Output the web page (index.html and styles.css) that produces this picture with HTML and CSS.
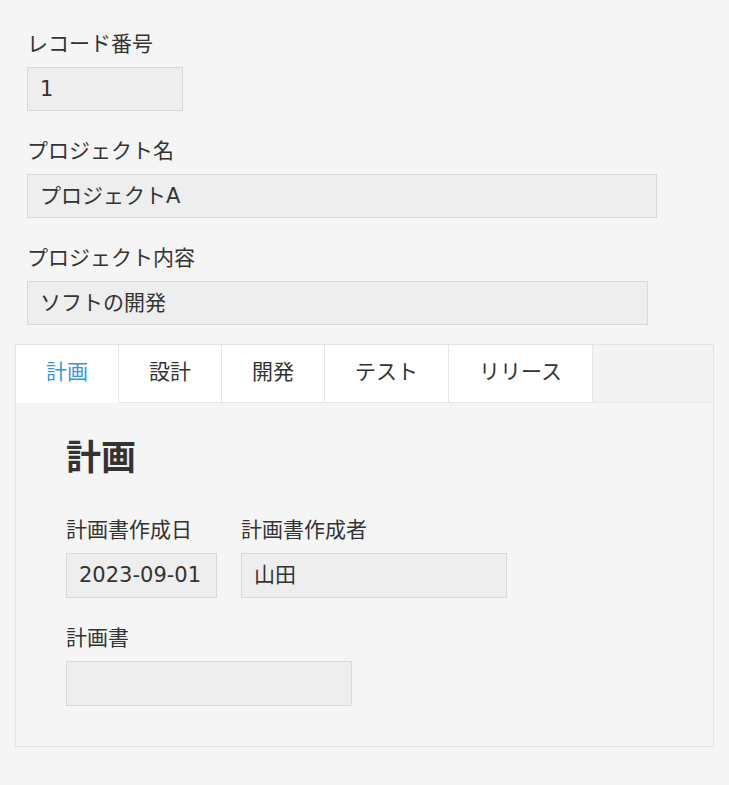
FILE: index.html
```html
<!DOCTYPE html>
<html lang="ja">
<head>
<meta charset="utf-8">
<title>レコード</title>
<link rel="stylesheet" href="styles.css">
</head>
<body>
<div class="form">
  <div class="fields">
    <div class="field">
      <div class="label">レコード番号</div>
      <div class="value w-record">1</div>
    </div>
    <div class="field">
      <div class="label">プロジェクト名</div>
      <div class="value w-name">プロジェクトA</div>
    </div>
    <div class="field">
      <div class="label">プロジェクト内容</div>
      <div class="value w-desc">ソフトの開発</div>
    </div>
  </div>

  <div class="tabs">
    <div class="tab-bar">
      <div class="tab active">計画</div>
      <div class="tab">設計</div>
      <div class="tab">開発</div>
      <div class="tab">テスト</div>
      <div class="tab">リリース</div>
    </div>
    <div class="panel">
      <h2 class="panel-title">計画</h2>
      <div class="row">
        <div class="field">
          <div class="label">計画書作成日</div>
          <div class="value w-date">2023-09-01</div>
        </div>
        <div class="field">
          <div class="label">計画書作成者</div>
          <div class="value w-author">山田</div>
        </div>
      </div>
      <div class="row">
        <div class="field">
          <div class="label">計画書</div>
          <div class="value w-doc"></div>
        </div>
      </div>
    </div>
  </div>
</div>
</body>
</html>
```

FILE: styles.css
```css
* {
  box-sizing: border-box;
}

body {
  margin: 0;
  background: #f5f5f5;
  color: #333333;
  font-family: "Noto Sans CJK JP", "Noto Sans", sans-serif;
  font-size: 21px;
}

.form {
  padding: 27px 15px 30px 15px;
}

.fields {
  display: flex;
  flex-direction: column;
  gap: 23px;
  padding-left: 12px;
}

.field {
  display: flex;
  flex-direction: column;
  align-items: flex-start;
}

.label {
  line-height: 30px;
  margin-bottom: 10px;
  white-space: nowrap;
}

.value {
  height: 44px;
  border: 1px solid #d8d8d8;
  background: #eeeeee;
  padding: 0 12px 0 12px;
  font-family: "DejaVu Sans", "Noto Sans CJK JP", sans-serif;
  line-height: 42px;
  white-space: nowrap;
  overflow: hidden;
}

.w-record { width: 156px; }
.w-name { width: 630px; }
.w-desc { width: 621px; }
.w-date { width: 151px; }
.w-author { width: 266px; }
.w-doc { width: 286px; }

.tabs {
  margin-top: 19px;
  border: 1px solid #e0e3ea;
}

.tab-bar {
  display: flex;
  background: #f3f3f4;
  border-bottom: 1px solid #e3e6ec;
}

.tab {
  background: #ffffff;
  border-right: 1px solid #e3e6ec;
  border-bottom: 1px solid #e3e6ec;
  margin-bottom: -1px;
  padding: 0 30px 6px 30px;
  line-height: 51px;
  white-space: nowrap;
}

.tab.active {
  color: #3498db;
  border-bottom-color: #ffffff;
}

.panel {
  padding: 27px 50px 40px 50px;
  display: flex;
  flex-direction: column;
  gap: 23px;
}

.panel-title {
  margin: 0 0 10px 0;
  font-size: 35px;
  font-weight: bold;
  line-height: 50px;
}

.panel .value {
  height: 45px;
  line-height: 43px;
}

.row {
  display: flex;
  gap: 24px;
}
```
